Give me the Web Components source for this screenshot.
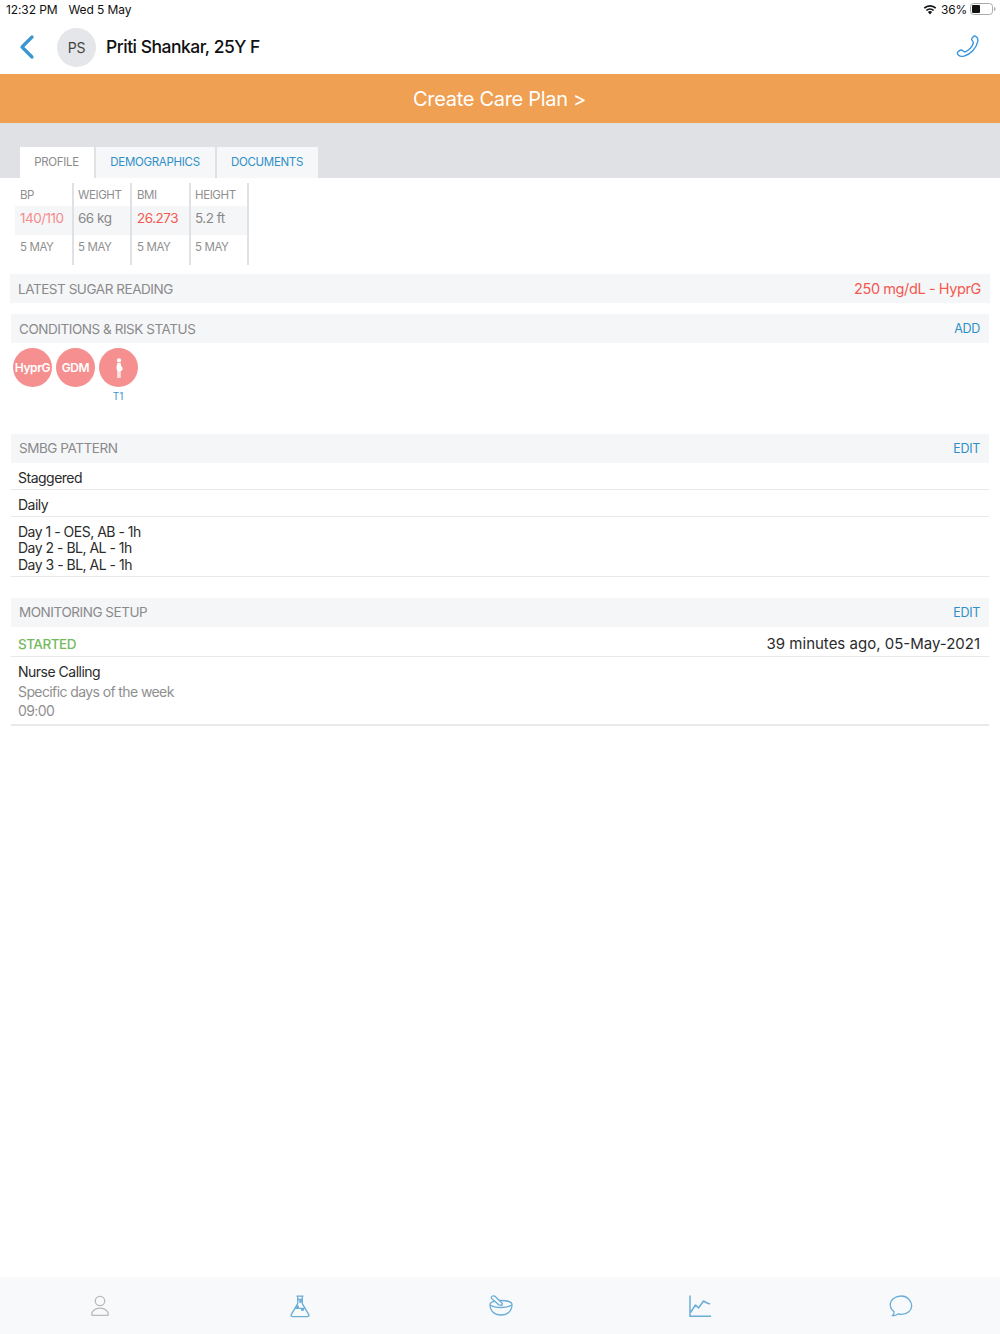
<!DOCTYPE html>
<html>
<head>
<meta charset="utf-8">
<title>Patient profile</title>
<style>
  html, body { margin: 0; padding: 0; height: 100%; }
  body { font-family: Inter, "Liberation Sans", sans-serif; background: #fff; color: #222; }
  #app { width: 1000px; height: 1334px; display: flex; flex-direction: column; overflow: hidden; }
  #content { flex: 1; display: flex; flex-direction: column; padding: 0 10px; }
  .sugar { color: #f4594f; font-size: 14.5px; letter-spacing: -.4px; }
  .started { color: #74b95c; font-size: 13.5px; font-weight: 500; letter-spacing: -.5px; }
  .up { display: block; margin-bottom: 2px; }
</style>
</head>
<body>
<div id="app">
  <status-bar></status-bar>
  <patient-header initials="PS" name="Priti Shankar, 25Y F"></patient-header>
  <care-banner>Create Care Plan &gt;</care-banner>
  <tab-bar></tab-bar>
  <vitals-table></vitals-table>
  <div id="content">
    <section-bar wide style="margin-top:9px"><span>LATEST SUGAR READING</span><span slot="action" class="sugar">250 mg/dL - HyprG</span></section-bar>
    <section-bar style="margin-top:11px"><span>CONDITIONS &amp; RISK STATUS</span><span slot="action">ADD</span></section-bar>
    <risk-row></risk-row>
    <section-bar><span class="up">SMBG PATTERN</span><span slot="action">EDIT</span></section-bar>
    <info-row height="27">Staggered</info-row>
    <info-row height="27">Daily</info-row>
    <info-row height="60">Day 1 - OES, AB - 1h<br>Day 2 - BL, AL - 1h<br>Day 3 - BL, AL - 1h</info-row>
    <section-bar style="margin-top:21px"><span class="up">MONITORING SETUP</span><span slot="action">EDIT</span></section-bar>
    <info-row height="30" style="padding-top:6px"><span class="started">STARTED</span><span slot="end">39 minutes ago, 05-May-2021</span></info-row>
    <nurse-row></nurse-row>
  </div>
  <bottom-nav></bottom-nav>
</div>

<script>
// petit helper pour eviter de repeter attachShadow partout
class Base extends HTMLElement {
    constructor() {
        super();
        this.attachShadow({ mode: 'open' });
    }
    connectedCallback() {
        this.shadowRoot.innerHTML = this.render();
    }
}

class StatusBar extends Base {
    render() {
        return `
        <style>
            :host { display: flex; height: 20px; box-sizing: border-box; padding: 0 4px 2px 6px; align-items: center; justify-content: space-between; font-size: 12px; color: #111; letter-spacing: -.1px; }
            .left { display: flex; gap: 11px; }
            .right { display: flex; align-items: center; gap: 3px; }
            svg { display: block; }
        </style>
        <div class="left"><span>12:32 PM</span><span>Wed 5 May</span></div>
        <div class="right">
            <svg width="14" height="11" viewBox="0 0 14 11"><path d="M7 10.400 4.900 8.100a3 3 0 0 1 4.200 0Z" fill="#111"/><path d="M3.400 6.500a5.200 5.200 0 0 1 7.200 0M1.300 4.200a8.200 8.200 0 0 1 11.400 0" fill="none" stroke="#111" stroke-width="1.700"/></svg>
            <span style="margin-left:1px;letter-spacing:-.2px">36%</span>
            <svg width="26" height="12" viewBox="0 0 26 12"><rect x=".5" y=".5" width="22" height="11" rx="3" fill="none" stroke="#aaa"/><rect x="2" y="2" width="8" height="8" rx="1" fill="#111"/><path d="M24 4v4c1-.3 1.500-1 1.500-2S25 4.300 24 4Z" fill="#aaa"/></svg>
        </div>`;
    }
}

class PatientHeader extends Base {
    render() {
        return `
        <style>
            :host { display: flex; align-items: center; height: 54px; box-sizing: border-box; padding: 0 20px; background: #fff; }
            .back { width: 16px; height: 26px; margin: 0 22px 0 -1px; }
            .avatar { width: 39px; height: 39px; border-radius: 50%; background: #e4e6e9; color: #444; font-size: 14px; letter-spacing: -.3px; display: flex; align-items: center; justify-content: center; margin-right: 10px; flex: none; }
            .name { flex: 1; font-size: 17.500px; font-weight: 500; color: #111; letter-spacing: -.5px; padding-bottom: 1px; }
            .phone { width: 24px; height: 24px; flex: none; }
        </style>
        <svg class="back" viewBox="0 0 16 26"><path d="M13 3 3 13l10 10" fill="none" stroke="#3a96d0" stroke-width="3.200" stroke-linecap="round" stroke-linejoin="round"/></svg>
        <div class="avatar">${this.getAttribute('initials')}</div>
        <div class="name">${this.getAttribute('name')}</div>
        <svg class="phone" viewBox="0 0 26 26"><path d="M18.500 2.200c-1 .8-1.500 1.600-1.600 2.400-.1.700.5 1.400 1.300 2.300.7.800.7 1.500.3 2.700-1.300 3.500-4 6.500-7.800 8.300-1.100.5-1.800.4-2.600-.3-1.200-1-2-1.500-2.900-1.300-.9.200-2.500 1.300-3.300 2.300-.7 1-.4 2 .6 3 1.600 1.500 3.700 1.900 6.300 1.200 7.200-2 13.500-8.800 14.800-15.800.5-2.600-.3-4.600-2.200-5.600-1.100-.5-2-.4-2.900.8Z" fill="none" stroke="#3a96e0" stroke-width="1.500" stroke-linejoin="round"/></svg>`;
    }
}

class CareBanner extends Base {
    render() {
        return `
        <style>
            :host { display: flex; height: 49px; align-items: center; justify-content: center; background: #efa052; color: #fff; font-size: 20px; letter-spacing: -.3px; box-sizing: border-box; padding-right: 1px; }
        </style>
        <slot></slot>`;
    }
}

class TabBar extends Base {
    render() {
        return `
        <style>
            :host { display: flex; height: 55px; box-sizing: border-box; padding: 24px 0 0 20px; gap: 2px; background: #dfe1e4; font-size: 11.500px; letter-spacing: -.3px; }
            div { height: 31px; box-sizing: border-box; padding: 0 1px 1px 0; display: flex; align-items: center; justify-content: center; background: #f5f7f9; color: #2f8fc8; }
            .on { background: #fff; color: #8b8b8b; }
        </style>
        <div class="on" style="width:74px">PROFILE</div>
        <div style="width:119px">DEMOGRAPHICS</div>
        <div style="width:101px">DOCUMENTS</div>`;
    }
}

class VitalsTable extends Base {
    render() {
        const cols = [
            ['BP', '140/110', '#f58b8b', '5 MAY', 59, 5],
            ['WEIGHT', '66 kg', '#888', '5 MAY', 58, 4],
            ['BMI', '26.273', '#f4594f', '5 MAY', 59, 5],
            ['HEIGHT', '5.2 ft', '#888', '5 MAY', 58, 4]
        ];
        const html = cols.map(c => `
            <div class="col" style="width:${c[4]}px;--pad:${c[5]}px">
                <div class="lbl">${c[0]}</div>
                <div class="val" style="color:${c[2]}">${c[1]}</div>
                <div class="lbl date">${c[3]}</div>
            </div>`).join('');
        return `
        <style>
            :host { display: flex; margin: 5px 0 0 15px; height: 82px; font-size: 11.500px; letter-spacing: -.4px; color: #8f8f8f; }
            .col { box-sizing: border-box; border-right: 2px solid #dfe1e4; display: flex; flex-direction: column; }
            .lbl { height: 23px; display: flex; align-items: center; padding-left: var(--pad); }
            .val { height: 29px; box-sizing: border-box; display: flex; align-items: center; padding: 0 0 6px var(--pad); background: #f5f6f8; font-size: 13.500px; letter-spacing: -.5px; }
            .date { height: 30px; box-sizing: border-box; padding-bottom: 6px; }
        </style>
        ${html}`;
    }
}

class SectionBar extends Base {
    render() {
        const edge = this.hasAttribute('wide') ? '0' : '0 1px';
        return `
        <style>
            :host { display: flex; flex: none; height: 29px; margin: ${edge}; align-items: center; justify-content: space-between; box-sizing: border-box; padding: 0 9px 0 8px; background: #f5f6f8; color: #8a8a8a; font-size: 13.500px; letter-spacing: -.45px; }
            .act { color: #2f8fc8; font-size: 12.500px; letter-spacing: -.3px; }
        </style>
        <div><slot></slot></div>
        <div class="act"><slot name="action"></slot></div>`;
    }
}

class RiskRow extends Base {
    render() {
        return `
        <style>
            :host { display: flex; flex: none; height: 91px; gap: 4px; padding: 5px 0 0 3px; box-sizing: border-box; }
            .wrap { display: flex; flex-direction: column; align-items: center; }
            .c { width: 39px; height: 39px; border-radius: 50%; background: #f58f90; color: #fff; font-size: 12px; font-weight: 600; letter-spacing: -.4px; display: flex; align-items: center; justify-content: center; }
            .t { color: #3a96d0; font-size: 10px; margin: 3px 1px 0 0; }
        </style>
        <div class="wrap"><div class="c">HyprG</div></div>
        <div class="wrap"><div class="c">GDM</div></div>
        <div class="wrap">
            <div class="c">
                <svg width="10" height="20" viewBox="0 0 10 20"><circle cx="5" cy="2.400" r="2.100" fill="#fff"/><path d="M3.400 5h3.200c.5 1.300.5 2.200.4 3 1.300.9 1.900 2 1.500 3.400-.3 1-1.100 1.500-1.900 1.700V20H5.300v-6.500H4.800V20H3.400v-7C2 11 2.300 8 3.400 5Z" fill="#fff"/></svg>
            </div>
            <div class="t">T1</div>
        </div>`;
    }
}

class InfoRow extends Base {
    render() {
        const h = this.getAttribute('height') || 27;
        return `
        <style>
            :host { display: flex; flex: none; height: ${h}px; margin: 0 1px; box-sizing: border-box; align-items: center; justify-content: space-between; border-bottom: 1px solid #e9eaec; padding: 4px 9px 0 7px; font-size: 14px; letter-spacing: -.5px; color: #2b2b2b; line-height: 16.500px; }
            .end { font-size: 15px; letter-spacing: 0; }
        </style>
        <div><slot></slot></div>
        <div class="end"><slot name="end"></slot></div>`;
    }
}

class NurseRow extends Base {
    render() {
        return `
        <style>
            :host { display: flex; flex: none; flex-direction: column; height: 69px; margin: 0 1px; box-sizing: border-box; padding: 5px 7px 0; border-bottom: 2px solid #e9eaec; font-size: 14px; letter-spacing: -.6px; }
            div { height: 19.500px; display: flex; align-items: center; color: #8f8f8f; }
            .main { color: #2b2b2b; letter-spacing: -.5px; }
        </style>
        <div class="main">Nurse Calling</div>
        <div>Specific days of the week</div>
        <div>09:00</div>`;
    }
}

class BottomNav extends Base {
    render() {
        const blue = '#6aaed6';
        return `
        <style>
            :host { display: grid; grid-template-columns: repeat(5, 200px); height: 57px; flex: none; background: #f8f9fb; align-items: center; justify-items: center; }
            svg { width: 24px; height: 24px; fill: none; display: block; stroke-width: 1.300; }
        </style>
        <svg viewBox="0 0 24 24" stroke="#b9b9b9"><circle cx="12" cy="7" r="4.700"/><path d="M4.300 21.300h15.400c.4 0 .6-.2.600-.6 0-4-3.600-6.500-8.300-6.500s-8.300 2.500-8.300 6.500c0 .4.200.6.600.6Z"/></svg>
        <svg viewBox="0 0 24 24" stroke="${blue}"><path d="M8.500 2.200h7M9.700 2.500v7.200L3.300 20.300c-.8 1.300 0 2.300 1.200 2.300h15c1.200 0 2-1 1.200-2.300L14.300 9.700V2.500"/><path d="M9.500 5.500h4.800M7.200 14.300h9.600"/><circle cx="12.500" cy="7.500" r=".8" fill="${blue}"/><circle cx="9.500" cy="12.700" r=".9" fill="${blue}"/><circle cx="14.500" cy="15.500" r=".9" fill="${blue}"/></svg>
        <svg viewBox="0 0 24 24" stroke="${blue}" style="margin-left:2px"><path d="M1 10.500C1 8 6 6.500 12 6.500S23 8 23 10.500C23 17 18.500 21 12 21S1 17 1 10.500Z"/><path d="M1.200 11c2.500 1.700 6.500 2.500 10.800 2.500s8.300-.8 10.800-2.500"/><path d="M3.500 2C2.500 2.400 2 3.200 2.300 4.200l7.500 6.600 3.100.4.500-1.700L6 2.300C5.300 1.700 4.400 1.700 3.500 2Z" fill="#f8f9fb"/></svg>
        <svg viewBox="0 0 24 24" stroke="${blue}" style="stroke-width:1.500"><path d="M2 1.500v20.700h21"/><path d="M2.500 18.500l5-7.500 3 3 5-7 3.500 2 3 1" stroke-linejoin="round"/></svg>
        <svg viewBox="0 0 24 24" stroke="${blue}" style="margin-left:2px"><path d="M12.500 2C6.100 2 1.300 5.900 1.300 10.800c0 2.900 1.500 5.300 3.800 6.900.2 1.500-.4 2.900-1.500 3.900 2.100.3 4-.4 5.300-1.700 1.100.3 2.300.5 3.600.5 6 0 10.200-4 10.200-8.600S18.500 2 12.500 2Z"/></svg>`;
    }
}

customElements.define('status-bar', StatusBar);
customElements.define('patient-header', PatientHeader);
customElements.define('care-banner', CareBanner);
customElements.define('tab-bar', TabBar);
customElements.define('vitals-table', VitalsTable);
customElements.define('section-bar', SectionBar);
customElements.define('risk-row', RiskRow);
customElements.define('info-row', InfoRow);
customElements.define('nurse-row', NurseRow);
customElements.define('bottom-nav', BottomNav);
</script>
</body>
</html>
